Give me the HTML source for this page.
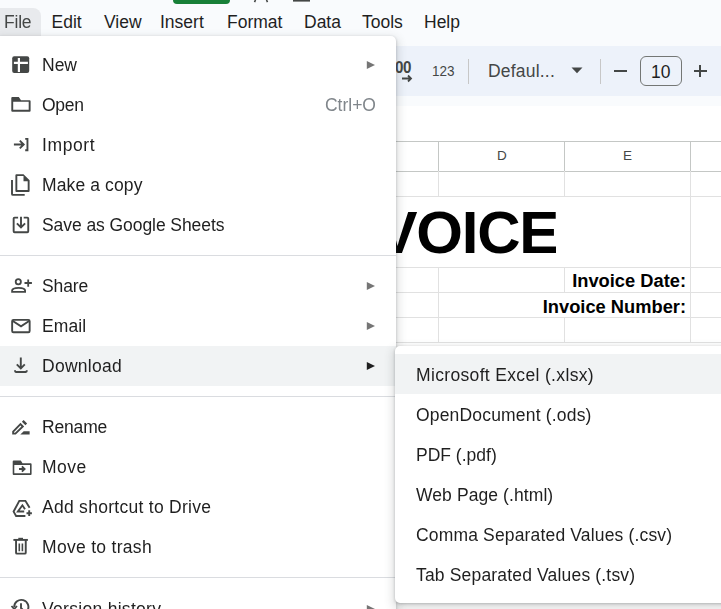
<!DOCTYPE html>
<html><head><meta charset="utf-8">
<style>
*{margin:0;padding:0;box-sizing:border-box}
html,body{width:721px;height:609px;overflow:hidden;background:#fff;font-family:"Liberation Sans",sans-serif;position:relative}
.abs{position:absolute}
#topbar{left:0;top:0;width:721px;height:46px;background:#f9fbfd}
.mb{position:absolute;top:8px;height:28px;font-size:17.5px;color:#1f1f1f;line-height:28px;white-space:nowrap}
#filetab{left:0;top:8px;width:41px;height:28px;background:#e8eaed;border-radius:0 8px 0 0}
#toolbar{left:0;top:46px;width:721px;height:50px;background:#edf2fa}
#strip{left:0;top:96px;width:721px;height:10px;background:#f9fbfd}
.hl{position:absolute;height:1px;background:#e1e1e1}
.vl{position:absolute;width:1px;background:#e1e1e1}
.hdr{background:#c4c7c5}
.tb{position:absolute;color:#444746;white-space:nowrap}
#menu{will-change:transform;left:0;top:36px;width:396px;height:600px;background:#fff;border-radius:0 5px 0 0;box-shadow:0 4px 8px 3px rgba(60,64,67,.15),0 1px 3px rgba(60,64,67,.3)}
.mi{position:absolute;left:0;width:396px;height:40px;font-size:17.5px;color:#1f1f1f;line-height:40px;white-space:nowrap}
.mi .t{position:absolute;left:42px;top:0}
.mi .arr{position:absolute;left:366px;top:15px;width:10px;height:10px}
.mi .sc{position:absolute;right:20px;top:0;color:#80868b}
.sep{position:absolute;left:0;width:396px;height:1px;background:#dadce0}
#sub{will-change:transform;left:395px;top:346px;width:340px;height:257px;background:#fff;border-radius:5px 0 0 5px;box-shadow:0 4px 8px 3px rgba(60,64,67,.15),0 1px 3px rgba(60,64,67,.3)}
.si{position:absolute;left:0;width:340px;height:40px;font-size:17.5px;color:#1f1f1f;line-height:40px;white-space:nowrap}
.si .t{position:absolute;left:21px;top:1px}
#icons{position:absolute;left:0;top:0}
</style></head><body>
<div id="topbar" class="abs"></div>
<div id="filetab" class="abs"></div>
<div class="mb" style="left:3.5px;color:#444746;letter-spacing:-0.2px;will-change:transform">File</div>
<div class="mb" style="left:51.5px">Edit</div>
<div class="mb" style="left:104px">View</div>
<div class="mb" style="left:160px">Insert</div>
<div class="mb" style="left:227px">Format</div>
<div class="mb" style="left:304px">Data</div>
<div class="mb" style="left:362px">Tools</div>
<div class="mb" style="left:424px">Help</div>
<div class="abs" style="left:173px;top:0;width:57px;height:4px;background:#188038;border-radius:0 0 4px 4px"></div>

<svg class="abs" style="left:250px;top:0" width="70" height="6"><path d="M5.5 0L4.5 2.2M16.5 0L17.5 2.2" stroke="#444746" stroke-width="1.6" fill="none"/><rect x="43" y="0" width="17" height="1.6" fill="#444746"/></svg>
<div id="toolbar" class="abs"></div>
<div id="strip" class="abs"></div>

<!-- toolbar items -->
<div class="tb" style="left:395px;top:58.2px;font-size:16.5px;font-weight:bold;letter-spacing:-0.6px;transform:scaleX(0.92);transform-origin:0 0">00</div>
<svg class="abs" style="left:400px;top:73px" width="14" height="10"><path d="M2 5.5H11M8 2.5L11 5.5L8 8.5" stroke="#444746" stroke-width="1.8" fill="none"/></svg>
<div class="tb" style="left:432px;top:61.6px;font-size:15px;transform:scaleX(0.9);transform-origin:0 0">123</div>
<div class="abs" style="left:468px;top:59px;width:1px;height:25px;background:#c7c7c7"></div>
<div class="tb" style="left:488px;top:61.2px;font-size:17.5px;letter-spacing:0.2px">Defaul...</div>
<svg class="abs" style="left:570px;top:66px" width="14" height="9"><path d="M1.5 1.5H12.5L7 7.3Z" fill="#444746"/></svg>
<div class="abs" style="left:600px;top:59px;width:1px;height:25px;background:#c7c7c7"></div>
<div class="abs" style="left:613.5px;top:70.2px;width:13.5px;height:2px;background:#444746"></div>
<div class="abs" style="left:640px;top:56px;width:42px;height:30px;border:1.2px solid #747775;border-radius:6px"></div>
<div class="tb" style="left:651px;top:62px;font-size:17.5px;color:#1f1f1f">10</div>
<div class="abs" style="left:694px;top:69.9px;width:12.7px;height:2px;background:#444746"></div>
<div class="abs" style="left:699.3px;top:64.5px;width:2px;height:12.8px;background:#444746"></div>

<!-- grid -->
<div class="hl hdr" style="left:396px;top:141px;width:325px"></div>
<div class="hl hdr" style="left:396px;top:171px;width:325px"></div>
<div class="vl hdr" style="left:438px;top:141px;height:30px"></div>
<div class="vl hdr" style="left:564px;top:141px;height:30px"></div>
<div class="vl hdr" style="left:690px;top:141px;height:30px"></div>
<div class="abs" style="left:497px;top:148px;font-size:13.5px;color:#444746">D</div>
<div class="abs" style="left:623px;top:148px;font-size:13.5px;color:#444746">E</div>
<div class="hl" style="left:396px;top:196px;width:325px"></div>
<div class="hl" style="left:396px;top:267px;width:325px"></div>
<div class="hl" style="left:396px;top:292px;width:325px"></div>
<div class="hl" style="left:396px;top:317px;width:325px"></div>
<div class="hl" style="left:396px;top:342px;width:325px"></div>
<div class="vl" style="left:438px;top:171px;height:25px"></div>
<div class="vl" style="left:564px;top:171px;height:25px"></div>
<div class="vl" style="left:690px;top:171px;height:171px"></div>
<div class="vl" style="left:438px;top:267px;height:75px"></div>
<div class="vl" style="left:564px;top:267px;height:25px"></div><div class="vl" style="left:564px;top:317px;height:25px"></div>
<div class="abs" style="left:380px;top:197px;width:176px;height:70px;overflow:hidden"><div class="abs" style="right:-2px;top:0px;font-size:60px;font-weight:bold;color:#000;line-height:71px;white-space:nowrap;letter-spacing:-1.25px">INVOICE</div></div>
<div class="abs" style="right:35px;top:271.3px;font-size:18.3px;font-weight:bold;color:#000;line-height:20px;white-space:nowrap">Invoice Date:</div>
<div class="abs" style="right:35px;top:297.3px;font-size:18.3px;font-weight:bold;color:#000;line-height:20px;white-space:nowrap">Invoice Number:</div>

<div id="menu" class="abs">
 <div class="mi" style="top:9px"><span class="t">New</span><svg class="arr" width="10" height="10"><path d="M0.8 0.9L9 5L0.8 9.1Z" fill="#757575"/></svg></div>
 <div class="mi" style="top:49px"><span class="t" style="letter-spacing:-0.3px">Open</span><span class="sc">Ctrl+O</span></div>
 <div class="mi" style="top:89px"><span class="t" style="letter-spacing:0.6px">Import</span></div>
 <div class="mi" style="top:129px"><span class="t" style="letter-spacing:0.12px">Make a copy</span></div>
 <div class="mi" style="top:169px"><span class="t" style="letter-spacing:-0.07px">Save as Google Sheets</span></div>
 <div class="sep" style="top:219px"></div>
 <div class="mi" style="top:230px"><span class="t" style="letter-spacing:-0.1px">Share</span><svg class="arr" width="10" height="10"><path d="M0.8 0.9L9 5L0.8 9.1Z" fill="#757575"/></svg></div>
 <div class="mi" style="top:270px"><span class="t" style="letter-spacing:0.1px">Email</span><svg class="arr" width="10" height="10"><path d="M0.8 0.9L9 5L0.8 9.1Z" fill="#757575"/></svg></div>
 <div class="mi" style="top:310px;background:#f1f3f4"><span class="t" style="letter-spacing:0.28px">Download</span><svg class="arr" width="10" height="10"><path d="M0.8 0.9L9 5L0.8 9.1Z" fill="#1f1f1f"/></svg></div>
 <div class="sep" style="top:360px"></div>
 <div class="mi" style="top:371px"><span class="t" style="letter-spacing:-0.16px">Rename</span></div>
 <div class="mi" style="top:411px"><span class="t" style="letter-spacing:0.45px">Move</span></div>
 <div class="mi" style="top:451px"><span class="t" style="letter-spacing:0.28px">Add shortcut to Drive</span></div>
 <div class="mi" style="top:491px"><span class="t" style="letter-spacing:0.3px">Move to trash</span></div>
 <div class="sep" style="top:541px"></div>
 <div class="mi" style="top:553px"><span class="t" style="letter-spacing:0.3px">Version history</span><svg class="arr" width="10" height="10"><path d="M0.8 0.9L9 5L0.8 9.1Z" fill="#757575"/></svg></div>
</div>

<svg id="icons" width="40" height="609" viewBox="0 0 40 609">
<g fill="#444746">
 <!-- New -->
 <rect x="12.2" y="56.2" width="17" height="16.8" rx="2"/>
 <!-- Open folder -->
 <path fill-rule="evenodd" d="M11.3 98.1Q11.3 97.1 12.3 97.1H18.8L21 100.3H29.6Q30.6 100.3 30.6 101.3V110.7Q30.6 111.7 29.6 111.7H12.3Q11.3 111.7 11.3 110.7ZM13.2 101.7V109.8H28.7V101.7Z"/>
 <!-- Copy front -->
 <path fill-rule="evenodd" d="M16.4 174.2H23.5L29.6 180.3V191Q29.6 192 28.6 192H16.4Q15.4 192 15.4 191V175.2Q15.4 174.2 16.4 174.2ZM17.3 176.1V190.1H27.7V181.2H23.5V176.1Z"/>
 <!-- Share body -->
 <path fill-rule="evenodd" d="M11.2 292.8V290.6Q11.2 287 18.6 287Q26 287 26 290.6V292.8ZM13 291V290.8Q13 288.8 18.6 288.8Q24.2 288.8 24.2 290.8V291Z"/>
 <!-- Move folder -->
 <path fill-rule="evenodd" d="M12.7 461.4Q12.7 460.4 13.7 460.4H20.8L22.5 463.3H30.6Q31.6 463.3 31.6 464.3V473.9Q31.6 474.9 30.6 474.9H13.7Q12.7 474.9 12.7 473.9ZM14.3 464.9V473.3H30V464.9Z"/>
 <!-- Rename bar -->
 <path d="M20.3 434.6L23.7 431.2H29.6V434.6Z"/>
</g>
<g fill="none" stroke="#444746" stroke-width="1.9">
 <path d="M18.9 57.9V71.9M13.9 62.9H27.9" stroke="#fff" stroke-width="2.2"/>
 <!-- Import -->
 <path d="M13.9 144.5H23.5M19.8 140.6L23.7 144.5L19.8 148.4"/>
 <path d="M25.2 138.85H27.45V150.25H25.2"/>
 <!-- Copy back -->
 <path d="M12 180.1V193.9Q12 194.9 13 194.9H24.7"/>
 <!-- Save -->
 <path d="M18.1 217.65H14.6Q13.65 217.65 13.65 218.6V231.3Q13.65 232.25 14.6 232.25H27.3Q28.25 232.25 28.25 231.3V218.6Q28.25 217.65 27.3 217.65H23.7"/>
 <path d="M21 216.7V227M16.9 223.3L21 227.4L25.1 223.3"/>
 <!-- Share head & plus -->
 <circle cx="18.3" cy="281.8" r="2.6" stroke-width="1.8"/>
 <path d="M24.5 283H31.9M28.2 279.4V286.7" stroke-width="1.8"/>
 <!-- Email -->
 <rect x="12.15" y="319.85" width="17.5" height="12.4" rx="1.3"/>
 <path d="M12.4 320.8L21 326.3L29.5 320.8"/>
 <!-- Download -->
 <path d="M20.8 357.4V368M16.8 364.3L20.8 368.3L24.8 364.3"/>
 <path d="M15.05 370.2V371.1Q15.05 371.95 15.9 371.95H25.9Q26.75 371.95 26.75 371.1V370.2"/>
 <!-- Rename pencil -->
 <path d="M13.15 431.6L20.5 424.2L22.8 426.5L15.4 433.65H13.15Z"/>
 <path d="M22.75 420.85L26.25 424.35" stroke-width="2.5"/>
 <!-- Move arrow -->
 <path d="M19 469H24.6M21.9 466.3L24.6 469L21.9 471.7"/>
 <!-- Drive -->
 <path d="M25.4 515.95H16.1L13.6 511.6L19.3 500.85H25.4L29.6 507.8"/>
 <path d="M25 509.3L22.4 505.3L17.9 511.45H24.2"/>
 <path d="M26.5 513.2H31.9M29.2 510.3V516.1"/>
 <!-- Trash -->
 <path d="M13.4 539.9H27.9"/>
 <path d="M18.3 538.6H23" stroke-width="1.6"/>
 <path d="M16.05 539.9V552.7Q16.05 553.65 17 553.65H24.8Q25.75 553.65 25.75 552.7V539.9"/>
 <path d="M19.3 543.6V551.2M22.4 543.6V551.2" stroke-width="1.6"/>
 <!-- Version history -->
 <path d="M14.2 607A7.1 7.1 0 1 1 16 611.7"/>
 <path d="M21 603.2V608L24 611"/>
 <path d="M11.5 606L14.2 609L17 606" stroke-width="1.8"/>
</g>
</svg>

<div id="sub" class="abs">
 <div class="si" style="top:8px;background:#f1f3f4"><span class="t" style="letter-spacing:0.34px">Microsoft Excel (.xlsx)</span></div>
 <div class="si" style="top:48px"><span class="t" style="letter-spacing:0.18px">OpenDocument (.ods)</span></div>
 <div class="si" style="top:88px"><span class="t">PDF (.pdf)</span></div>
 <div class="si" style="top:128px"><span class="t" style="letter-spacing:0.09px">Web Page (.html)</span></div>
 <div class="si" style="top:168px"><span class="t" style="letter-spacing:0.16px">Comma Separated Values (.csv)</span></div>
 <div class="si" style="top:208px"><span class="t" style="letter-spacing:0.17px">Tab Separated Values (.tsv)</span></div>
</div>
</body></html>
